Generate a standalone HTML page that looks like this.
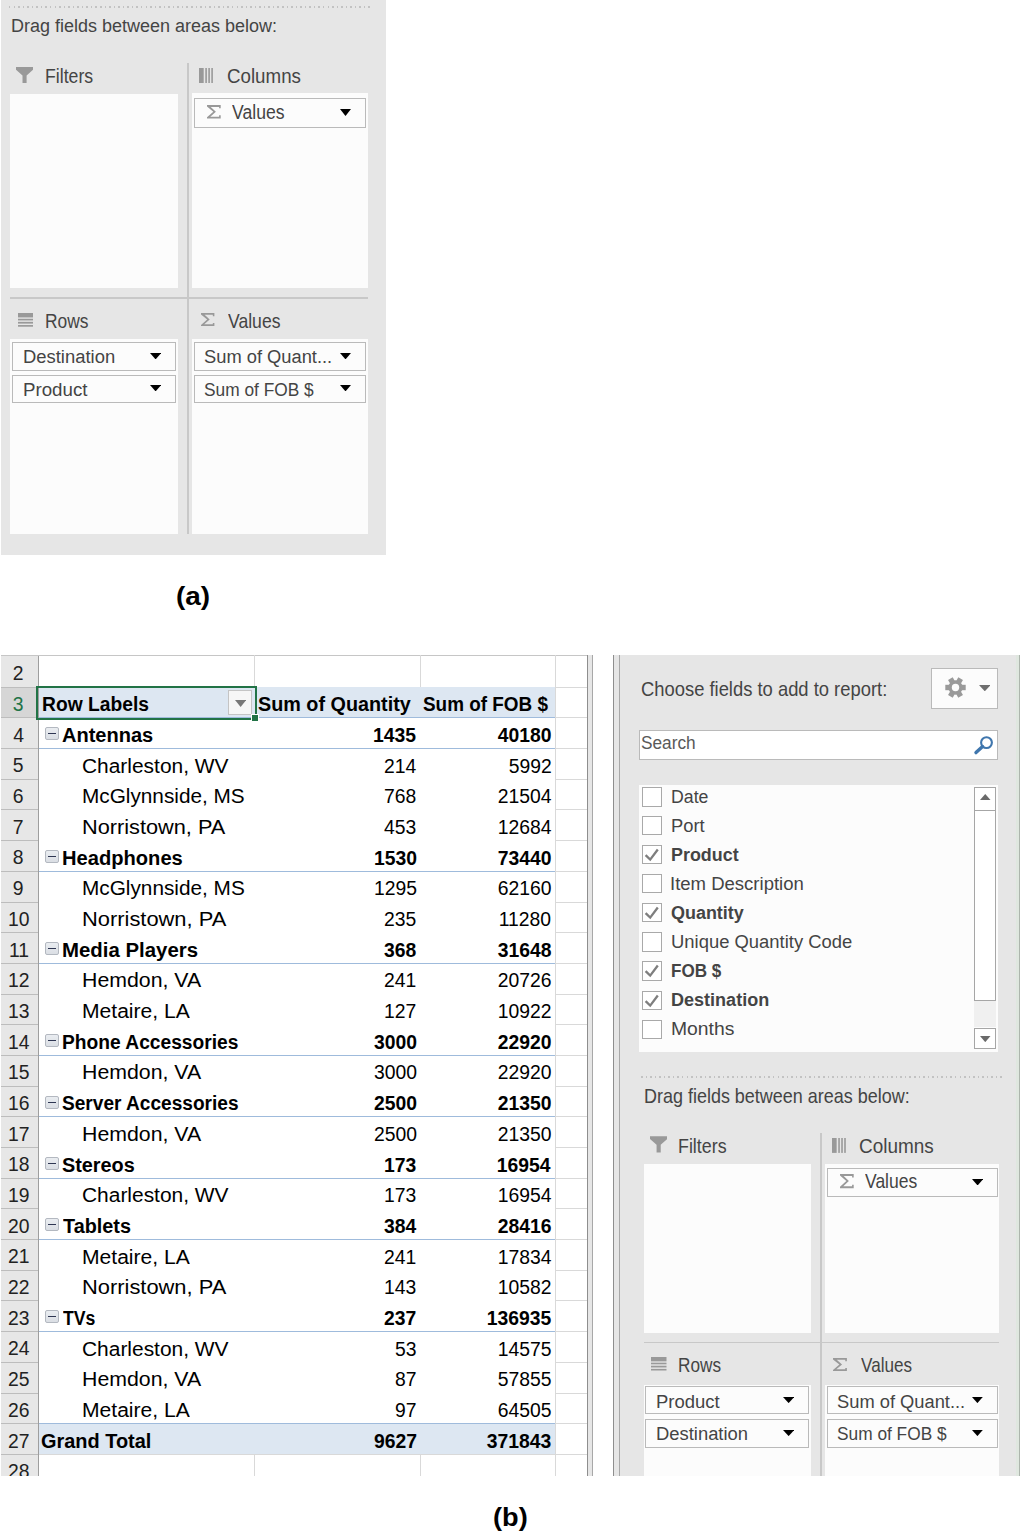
<!DOCTYPE html>
<html><head><meta charset="utf-8"><style>
html,body{margin:0;padding:0;background:#fff;width:1020px;height:1536px;overflow:hidden;position:relative}
div{position:absolute;box-sizing:border-box}
.tx{font-family:'Liberation Sans', sans-serif;white-space:pre;transform-origin:0 0}
</style></head><body>
<div style="left:1px;top:0px;width:385.00px;height:555.00px;background:#e6e6e6"></div>
<div style="left:9px;top:6.25px;width:363.00px;height:1.50px;background:repeating-linear-gradient(90deg,#c2c2c2 0 1.5px,transparent 1.5px 4.55px)"></div>
<svg style="position:absolute;left:16px;top:67px" width="17.00" height="16.00" viewBox="0 0 17 16"><path d="M0 0H17V2.8L10.6 8.4V16H6.5V8.4L0 2.8Z" fill="#999999"/></svg>
<svg style="position:absolute;left:199px;top:68px" width="14.00" height="15.00" viewBox="0 0 14 15" preserveAspectRatio="none"><rect x="0" y="0" width="4.7" height="15" fill="#999999"/><rect x="6.3" y="0" width="1.6" height="15" fill="#999999"/><rect x="9.3" y="0" width="1.6" height="15" fill="#999999"/><rect x="12.3" y="0" width="1.6" height="15" fill="#999999"/></svg>
<div style="left:10px;top:94px;width:168.00px;height:194.00px;background:#fcfcfc"></div>
<div style="left:192px;top:93px;width:176.00px;height:195.00px;background:#fcfcfc"></div>
<div style="left:187.3px;top:63px;width:1.50px;height:471.00px;background:#c8c8c8"></div>
<div style="left:10px;top:297.3px;width:358.00px;height:1.50px;background:#c8c8c8"></div>
<div style="left:194px;top:97.5px;width:172.00px;height:30.30px;background:#fcfcfc;border:1.5px solid #bababa"></div>
<svg style="position:absolute;left:207px;top:105px" width="14.00" height="13.60" viewBox="0 0 14 13.6" preserveAspectRatio="none"><path d="M0 0H13.7V3.3H12.1V1.9H3.7L8.9 6.8L3.3 11.7H12.1V10.2H13.7V13.6H0V12.3L6.3 6.8L0 1.5Z" fill="#999999"/></svg>
<svg style="position:absolute;left:340px;top:109px" width="11.00" height="7.00" viewBox="0 0 11.00 7.00"><path d="M0 0H11.00L5.50 7.00Z" fill="#000"/></svg>
<svg style="position:absolute;left:18px;top:313px" width="15.00" height="13.80" viewBox="0 0 15 13.4" preserveAspectRatio="none"><rect x="0" y="0" width="15" height="4.3" fill="#999999"/><rect x="0" y="5.6" width="15" height="1.6" fill="#999999"/><rect x="0" y="8.6" width="15" height="1.7" fill="#999999"/><rect x="0" y="11.7" width="15" height="1.6" fill="#999999"/></svg>
<svg style="position:absolute;left:201.4px;top:313.3px" width="13.70" height="13.20" viewBox="0 0 14 13.6" preserveAspectRatio="none"><path d="M0 0H13.7V3.3H12.1V1.9H3.7L8.9 6.8L3.3 11.7H12.1V10.2H13.7V13.6H0V12.3L6.3 6.8L0 1.5Z" fill="#999999"/></svg>
<div style="left:10px;top:338.6px;width:168.00px;height:195.70px;background:#fcfcfc"></div>
<div style="left:192px;top:338.6px;width:176.00px;height:195.70px;background:#fcfcfc"></div>
<div style="left:12.2px;top:342.3px;width:163.80px;height:28.30px;background:#fcfcfc;border:1.5px solid #bababa"></div>
<div style="left:12.2px;top:375.1px;width:163.80px;height:27.90px;background:#fcfcfc;border:1.5px solid #bababa"></div>
<div style="left:194px;top:342.3px;width:171.80px;height:28.30px;background:#fcfcfc;border:1.5px solid #bababa"></div>
<div style="left:194px;top:375.1px;width:171.80px;height:27.90px;background:#fcfcfc;border:1.5px solid #bababa"></div>
<svg style="position:absolute;left:150px;top:352.5px" width="11.20" height="6.40" viewBox="0 0 11.20 6.40"><path d="M0 0H11.20L5.60 6.40Z" fill="#000"/></svg>
<svg style="position:absolute;left:150px;top:384.8px" width="11.20" height="6.40" viewBox="0 0 11.20 6.40"><path d="M0 0H11.20L5.60 6.40Z" fill="#000"/></svg>
<svg style="position:absolute;left:340px;top:352.5px" width="11.00" height="6.40" viewBox="0 0 11.00 6.40"><path d="M0 0H11.00L5.50 6.40Z" fill="#000"/></svg>
<svg style="position:absolute;left:340px;top:384.8px" width="11.00" height="6.40" viewBox="0 0 11.00 6.40"><path d="M0 0H11.00L5.50 6.40Z" fill="#000"/></svg>
<div style="left:1px;top:655.0px;width:587.00px;height:820.60px;background:#fff"></div>
<div style="left:1px;top:655.0px;width:37.50px;height:820.60px;background:#e7e7e7"></div>
<div style="left:1px;top:687.0px;width:37.50px;height:30.00px;background:#d6d6d6"></div>
<div style="left:37.6px;top:655.0px;width:1.20px;height:820.60px;background:#9e9e9e"></div>
<div style="left:1px;top:655.0px;width:587.00px;height:1.20px;background:#c6c6c6"></div>
<div style="left:1px;top:687.0px;width:36.60px;height:1.00px;background:#bdbdbd"></div>
<div style="left:555.5px;top:687.0px;width:32.00px;height:1.00px;background:#d9d9d9"></div>
<div style="left:1px;top:717.0px;width:36.60px;height:1.00px;background:#bdbdbd"></div>
<div style="left:555.5px;top:717.0px;width:32.00px;height:1.00px;background:#d9d9d9"></div>
<div style="left:1px;top:748.0px;width:36.60px;height:1.00px;background:#bdbdbd"></div>
<div style="left:555.5px;top:748.0px;width:32.00px;height:1.00px;background:#d9d9d9"></div>
<div style="left:1px;top:779.0px;width:36.60px;height:1.00px;background:#bdbdbd"></div>
<div style="left:555.5px;top:779.0px;width:32.00px;height:1.00px;background:#d9d9d9"></div>
<div style="left:1px;top:809.0px;width:36.60px;height:1.00px;background:#bdbdbd"></div>
<div style="left:555.5px;top:809.0px;width:32.00px;height:1.00px;background:#d9d9d9"></div>
<div style="left:1px;top:840.0px;width:36.60px;height:1.00px;background:#bdbdbd"></div>
<div style="left:555.5px;top:840.0px;width:32.00px;height:1.00px;background:#d9d9d9"></div>
<div style="left:1px;top:871.0px;width:36.60px;height:1.00px;background:#bdbdbd"></div>
<div style="left:555.5px;top:871.0px;width:32.00px;height:1.00px;background:#d9d9d9"></div>
<div style="left:1px;top:902.0px;width:36.60px;height:1.00px;background:#bdbdbd"></div>
<div style="left:555.5px;top:902.0px;width:32.00px;height:1.00px;background:#d9d9d9"></div>
<div style="left:1px;top:932.0px;width:36.60px;height:1.00px;background:#bdbdbd"></div>
<div style="left:555.5px;top:932.0px;width:32.00px;height:1.00px;background:#d9d9d9"></div>
<div style="left:1px;top:963.0px;width:36.60px;height:1.00px;background:#bdbdbd"></div>
<div style="left:555.5px;top:963.0px;width:32.00px;height:1.00px;background:#d9d9d9"></div>
<div style="left:1px;top:994.0px;width:36.60px;height:1.00px;background:#bdbdbd"></div>
<div style="left:555.5px;top:994.0px;width:32.00px;height:1.00px;background:#d9d9d9"></div>
<div style="left:1px;top:1024.0px;width:36.60px;height:1.00px;background:#bdbdbd"></div>
<div style="left:555.5px;top:1024.0px;width:32.00px;height:1.00px;background:#d9d9d9"></div>
<div style="left:1px;top:1055.0px;width:36.60px;height:1.00px;background:#bdbdbd"></div>
<div style="left:555.5px;top:1055.0px;width:32.00px;height:1.00px;background:#d9d9d9"></div>
<div style="left:1px;top:1086.0px;width:36.60px;height:1.00px;background:#bdbdbd"></div>
<div style="left:555.5px;top:1086.0px;width:32.00px;height:1.00px;background:#d9d9d9"></div>
<div style="left:1px;top:1116.0px;width:36.60px;height:1.00px;background:#bdbdbd"></div>
<div style="left:555.5px;top:1116.0px;width:32.00px;height:1.00px;background:#d9d9d9"></div>
<div style="left:1px;top:1147.0px;width:36.60px;height:1.00px;background:#bdbdbd"></div>
<div style="left:555.5px;top:1147.0px;width:32.00px;height:1.00px;background:#d9d9d9"></div>
<div style="left:1px;top:1178.0px;width:36.60px;height:1.00px;background:#bdbdbd"></div>
<div style="left:555.5px;top:1178.0px;width:32.00px;height:1.00px;background:#d9d9d9"></div>
<div style="left:1px;top:1208.0px;width:36.60px;height:1.00px;background:#bdbdbd"></div>
<div style="left:555.5px;top:1208.0px;width:32.00px;height:1.00px;background:#d9d9d9"></div>
<div style="left:1px;top:1239.0px;width:36.60px;height:1.00px;background:#bdbdbd"></div>
<div style="left:555.5px;top:1239.0px;width:32.00px;height:1.00px;background:#d9d9d9"></div>
<div style="left:1px;top:1270.0px;width:36.60px;height:1.00px;background:#bdbdbd"></div>
<div style="left:555.5px;top:1270.0px;width:32.00px;height:1.00px;background:#d9d9d9"></div>
<div style="left:1px;top:1300.0px;width:36.60px;height:1.00px;background:#bdbdbd"></div>
<div style="left:555.5px;top:1300.0px;width:32.00px;height:1.00px;background:#d9d9d9"></div>
<div style="left:1px;top:1331.0px;width:36.60px;height:1.00px;background:#bdbdbd"></div>
<div style="left:555.5px;top:1331.0px;width:32.00px;height:1.00px;background:#d9d9d9"></div>
<div style="left:1px;top:1362.0px;width:36.60px;height:1.00px;background:#bdbdbd"></div>
<div style="left:555.5px;top:1362.0px;width:32.00px;height:1.00px;background:#d9d9d9"></div>
<div style="left:1px;top:1393.0px;width:36.60px;height:1.00px;background:#bdbdbd"></div>
<div style="left:555.5px;top:1393.0px;width:32.00px;height:1.00px;background:#d9d9d9"></div>
<div style="left:1px;top:1423.0px;width:36.60px;height:1.00px;background:#bdbdbd"></div>
<div style="left:555.5px;top:1423.0px;width:32.00px;height:1.00px;background:#d9d9d9"></div>
<div style="left:1px;top:1454.0px;width:36.60px;height:1.00px;background:#bdbdbd"></div>
<div style="left:555.5px;top:1454.0px;width:32.00px;height:1.00px;background:#d9d9d9"></div>
<div style="left:38.8px;top:687.0px;width:516.70px;height:1.00px;background:#d9d9d9"></div>
<div style="left:253.9px;top:655.0px;width:1.20px;height:32.00px;background:#d9d9d9"></div>
<div style="left:253.9px;top:1454.0px;width:1.20px;height:21.60px;background:#d9d9d9"></div>
<div style="left:419.59999999999997px;top:655.0px;width:1.20px;height:32.00px;background:#d9d9d9"></div>
<div style="left:419.59999999999997px;top:1454.0px;width:1.20px;height:21.60px;background:#d9d9d9"></div>
<div style="left:554.9px;top:655.0px;width:1.20px;height:32.00px;background:#d9d9d9"></div>
<div style="left:554.9px;top:1454.0px;width:1.20px;height:21.60px;background:#d9d9d9"></div>
<div style="left:554.9px;top:655.0px;width:1.20px;height:820.60px;background:#d9d9d9"></div>
<div style="left:38.8px;top:687.0px;width:516.70px;height:30.00px;background:#dde7f2"></div>
<div style="left:38.8px;top:1423.0px;width:516.70px;height:31.00px;background:#dde7f2"></div>
<div style="left:38.8px;top:717.0px;width:516.70px;height:1.30px;background:#9fbbdc"></div>
<div style="left:38.8px;top:748.0px;width:516.70px;height:1.30px;background:#9fbbdc"></div>
<div style="left:38.8px;top:871.0px;width:516.70px;height:1.30px;background:#9fbbdc"></div>
<div style="left:38.8px;top:963.0px;width:516.70px;height:1.30px;background:#9fbbdc"></div>
<div style="left:38.8px;top:1055.0px;width:516.70px;height:1.30px;background:#9fbbdc"></div>
<div style="left:38.8px;top:1116.0px;width:516.70px;height:1.30px;background:#9fbbdc"></div>
<div style="left:38.8px;top:1178.0px;width:516.70px;height:1.30px;background:#9fbbdc"></div>
<div style="left:38.8px;top:1239.0px;width:516.70px;height:1.30px;background:#9fbbdc"></div>
<div style="left:38.8px;top:1331.0px;width:516.70px;height:1.30px;background:#9fbbdc"></div>
<div style="left:38.8px;top:1423.0px;width:516.70px;height:1.30px;background:#9fbbdc"></div>
<div style="left:38.8px;top:1454.0px;width:516.70px;height:1.00px;background:#d9d9d9"></div>
<div style="left:45.2px;top:726.6px;width:13.80px;height:13.00px;background:linear-gradient(#eaedf1,#dadee4);border:1.4px solid #b3b8c0;border-radius:2px"></div>
<div style="left:48.1px;top:732.6px;width:7.80px;height:1.40px;background:#2e3652"></div>
<div style="left:45.2px;top:849.6px;width:13.80px;height:13.00px;background:linear-gradient(#eaedf1,#dadee4);border:1.4px solid #b3b8c0;border-radius:2px"></div>
<div style="left:48.1px;top:855.6px;width:7.80px;height:1.40px;background:#2e3652"></div>
<div style="left:45.2px;top:941.6px;width:13.80px;height:13.00px;background:linear-gradient(#eaedf1,#dadee4);border:1.4px solid #b3b8c0;border-radius:2px"></div>
<div style="left:48.1px;top:947.6px;width:7.80px;height:1.40px;background:#2e3652"></div>
<div style="left:45.2px;top:1033.6px;width:13.80px;height:13.00px;background:linear-gradient(#eaedf1,#dadee4);border:1.4px solid #b3b8c0;border-radius:2px"></div>
<div style="left:48.1px;top:1039.6px;width:7.80px;height:1.40px;background:#2e3652"></div>
<div style="left:45.2px;top:1095.6px;width:13.80px;height:13.00px;background:linear-gradient(#eaedf1,#dadee4);border:1.4px solid #b3b8c0;border-radius:2px"></div>
<div style="left:48.1px;top:1101.6px;width:7.80px;height:1.40px;background:#2e3652"></div>
<div style="left:45.2px;top:1156.6px;width:13.80px;height:13.00px;background:linear-gradient(#eaedf1,#dadee4);border:1.4px solid #b3b8c0;border-radius:2px"></div>
<div style="left:48.1px;top:1162.6px;width:7.80px;height:1.40px;background:#2e3652"></div>
<div style="left:45.2px;top:1217.6px;width:13.80px;height:13.00px;background:linear-gradient(#eaedf1,#dadee4);border:1.4px solid #b3b8c0;border-radius:2px"></div>
<div style="left:48.1px;top:1223.6px;width:7.80px;height:1.40px;background:#2e3652"></div>
<div style="left:45.2px;top:1309.6px;width:13.80px;height:13.00px;background:linear-gradient(#eaedf1,#dadee4);border:1.4px solid #b3b8c0;border-radius:2px"></div>
<div style="left:48.1px;top:1315.6px;width:7.80px;height:1.40px;background:#2e3652"></div>
<div style="left:587px;top:655.0px;width:1.20px;height:820.60px;background:#8e8e8e"></div>
<div style="left:588.2px;top:655.0px;width:3.80px;height:820.60px;background:#e6e6e6"></div>
<div style="left:592px;top:655.0px;width:1.20px;height:820.60px;background:#a8a8a8"></div>
<div style="left:613px;top:655.0px;width:1.20px;height:820.60px;background:#8e8e8e"></div>
<div style="left:614.2px;top:655.0px;width:5.00px;height:820.60px;background:#e6e6e6"></div>
<div style="left:619.2px;top:655.0px;width:1.20px;height:820.60px;background:#a8a8a8"></div>
<div style="left:36.3px;top:685.5px;width:220.70px;height:34.30px;border:2.4px solid #217346"></div>
<div style="left:228.2px;top:690.4px;width:24.00px;height:24.60px;background:#f6f6f6;border:1.2px solid #c4c4c4"></div>
<svg style="position:absolute;left:235px;top:700px" width="11.30" height="7.00" viewBox="0 0 11.30 7.00"><path d="M0 0H11.30L5.65 7.00Z" fill="#777"/></svg>
<div style="left:250.6px;top:714.3px;width:8.20px;height:7.50px;background:#217346;border:1px solid #fff"></div>
<div style="left:620.4px;top:655.0px;width:395.60px;height:820.60px;background:#e6e6e6"></div>
<div style="left:1016px;top:655.0px;width:3.00px;height:820.60px;background:#dfe7df"></div>
<div style="left:1019px;top:655.0px;width:1.00px;height:820.60px;background:#adb5ad"></div>
<div style="left:931px;top:668.2px;width:67.00px;height:41.20px;background:#fcfcfc;border:1.5px solid #bababa"></div>
<svg style="position:absolute;left:945.3px;top:676.9px" width="21" height="21" viewBox="-10.5 -10.5 21 21"><g fill="#9a9a9a"><circle r="7.2"/><rect x="-2.7" y="-10.2" width="5.4" height="5" transform="rotate(30)"/><rect x="-2.7" y="-10.2" width="5.4" height="5" transform="rotate(90)"/><rect x="-2.7" y="-10.2" width="5.4" height="5" transform="rotate(150)"/><rect x="-2.7" y="-10.2" width="5.4" height="5" transform="rotate(210)"/><rect x="-2.7" y="-10.2" width="5.4" height="5" transform="rotate(270)"/><rect x="-2.7" y="-10.2" width="5.4" height="5" transform="rotate(330)"/></g><circle r="3.7" fill="#fcfcfc"/></svg>
<svg style="position:absolute;left:978.8px;top:685px" width="11.60" height="6.30" viewBox="0 0 11.60 6.30"><path d="M0 0H11.60L5.80 6.30Z" fill="#6f6f6f"/></svg>
<div style="left:639px;top:730px;width:359.00px;height:29.60px;background:#fff;border:1.5px solid #bababa"></div>
<svg style="position:absolute;left:968px;top:732px" width="28" height="26" viewBox="0 0 28 26"><circle cx="18.5" cy="10.6" r="5.4" fill="none" stroke="#3f76ad" stroke-width="2.1"/><path d="M14.6 14.6L8 20.6" stroke="#3f76ad" stroke-width="3.4" stroke-linecap="round"/></svg>
<div style="left:638.8px;top:784.7px;width:359.20px;height:267.10px;background:#fcfcfc"></div>
<div style="left:642.3px;top:787.2px;width:19.70px;height:19.40px;background:#fff;border:1.6px solid #a9a9a9"></div>
<div style="left:642.3px;top:816.0px;width:19.70px;height:19.40px;background:#fff;border:1.6px solid #a9a9a9"></div>
<div style="left:642.3px;top:844.9000000000001px;width:19.70px;height:19.40px;background:#fff;border:1.6px solid #a9a9a9"></div>
<svg style="position:absolute;left:642.3px;top:844.90px" width="19.7" height="19.4" viewBox="0 0 19.7 19.4"><path d="M3.6 10.1L8.2 14.6L15.8 4.5" fill="none" stroke="#7e7e7e" stroke-width="2.3"/></svg>
<div style="left:642.3px;top:874.1px;width:19.70px;height:19.40px;background:#fff;border:1.6px solid #a9a9a9"></div>
<div style="left:642.3px;top:903.0px;width:19.70px;height:19.40px;background:#fff;border:1.6px solid #a9a9a9"></div>
<svg style="position:absolute;left:642.3px;top:903.00px" width="19.7" height="19.4" viewBox="0 0 19.7 19.4"><path d="M3.6 10.1L8.2 14.6L15.8 4.5" fill="none" stroke="#7e7e7e" stroke-width="2.3"/></svg>
<div style="left:642.3px;top:932.4000000000001px;width:19.70px;height:19.40px;background:#fff;border:1.6px solid #a9a9a9"></div>
<div style="left:642.3px;top:961.4000000000001px;width:19.70px;height:19.40px;background:#fff;border:1.6px solid #a9a9a9"></div>
<svg style="position:absolute;left:642.3px;top:961.40px" width="19.7" height="19.4" viewBox="0 0 19.7 19.4"><path d="M3.6 10.1L8.2 14.6L15.8 4.5" fill="none" stroke="#7e7e7e" stroke-width="2.3"/></svg>
<div style="left:642.3px;top:990.6px;width:19.70px;height:19.40px;background:#fff;border:1.6px solid #a9a9a9"></div>
<svg style="position:absolute;left:642.3px;top:990.60px" width="19.7" height="19.4" viewBox="0 0 19.7 19.4"><path d="M3.6 10.1L8.2 14.6L15.8 4.5" fill="none" stroke="#7e7e7e" stroke-width="2.3"/></svg>
<div style="left:642.3px;top:1019.5px;width:19.70px;height:19.40px;background:#fff;border:1.6px solid #a9a9a9"></div>
<div style="left:973.7px;top:810.4px;width:22.30px;height:217.10px;background:#f0f0f0"></div>
<div style="left:973.7px;top:786.9px;width:22.30px;height:23.70px;background:#fff;border:1.5px solid #a6a6a6"></div>
<div style="left:973.7px;top:810.4px;width:22.30px;height:190.40px;background:#fff;border:1.5px solid #a6a6a6"></div>
<div style="left:973.7px;top:1027.5px;width:22.30px;height:21.90px;background:#fff;border:1.5px solid #a6a6a6"></div>
<svg style="position:absolute;left:980px;top:794px" width="10.5" height="6" viewBox="0 0 10.5 6"><path d="M0 6H10.5L5.25 0Z" fill="#6a6a6a"/></svg>
<svg style="position:absolute;left:980px;top:1036.3px" width="10.50" height="6.20" viewBox="0 0 10.50 6.20"><path d="M0 0H10.50L5.25 6.20Z" fill="#6a6a6a"/></svg>
<div style="left:641px;top:1076.25px;width:363.00px;height:1.50px;background:repeating-linear-gradient(90deg,#c2c2c2 0 1.5px,transparent 1.5px 4.55px)"></div>
<svg style="position:absolute;left:649.6px;top:1136px" width="17.20" height="16.60" viewBox="0 0 17 16"><path d="M0 0H17V2.8L10.6 8.4V16H6.5V8.4L0 2.8Z" fill="#999999"/></svg>
<svg style="position:absolute;left:832.1px;top:1137.9px" width="13.90" height="14.90" viewBox="0 0 14 15" preserveAspectRatio="none"><rect x="0" y="0" width="4.7" height="15" fill="#999999"/><rect x="6.3" y="0" width="1.6" height="15" fill="#999999"/><rect x="9.3" y="0" width="1.6" height="15" fill="#999999"/><rect x="12.3" y="0" width="1.6" height="15" fill="#999999"/></svg>
<div style="left:643.7px;top:1164px;width:166.90px;height:168.50px;background:#fcfcfc"></div>
<div style="left:825.3px;top:1164px;width:174.20px;height:168.50px;background:#fcfcfc"></div>
<div style="left:820.2px;top:1133px;width:1.50px;height:342.60px;background:#c8c8c8"></div>
<div style="left:643.7px;top:1341.5px;width:355.80px;height:1.50px;background:#c8c8c8"></div>
<div style="left:826.5px;top:1167.5px;width:171.20px;height:29.10px;background:#fcfcfc;border:1.5px solid #bababa"></div>
<svg style="position:absolute;left:840px;top:1174.4px" width="14.00" height="14.20" viewBox="0 0 14 13.6" preserveAspectRatio="none"><path d="M0 0H13.7V3.3H12.1V1.9H3.7L8.9 6.8L3.3 11.7H12.1V10.2H13.7V13.6H0V12.3L6.3 6.8L0 1.5Z" fill="#999999"/></svg>
<svg style="position:absolute;left:971.6px;top:1178.5px" width="11.20" height="6.50" viewBox="0 0 11.20 6.50"><path d="M0 0H11.20L5.60 6.50Z" fill="#000"/></svg>
<svg style="position:absolute;left:651px;top:1357.3px" width="15.50" height="13.60" viewBox="0 0 15 13.4" preserveAspectRatio="none"><rect x="0" y="0" width="15" height="4.3" fill="#999999"/><rect x="0" y="5.6" width="15" height="1.6" fill="#999999"/><rect x="0" y="8.6" width="15" height="1.7" fill="#999999"/><rect x="0" y="11.7" width="15" height="1.6" fill="#999999"/></svg>
<svg style="position:absolute;left:833px;top:1357.8px" width="14.20" height="13.20" viewBox="0 0 14 13.6" preserveAspectRatio="none"><path d="M0 0H13.7V3.3H12.1V1.9H3.7L8.9 6.8L3.3 11.7H12.1V10.2H13.7V13.6H0V12.3L6.3 6.8L0 1.5Z" fill="#999999"/></svg>
<div style="left:643.7px;top:1384.5px;width:166.90px;height:91.10px;background:#fcfcfc"></div>
<div style="left:825.3px;top:1384.5px;width:174.20px;height:91.10px;background:#fcfcfc"></div>
<div style="left:645.2px;top:1386.4px;width:163.60px;height:27.90px;background:#fcfcfc;border:1.5px solid #bababa"></div>
<div style="left:645.2px;top:1419.2px;width:163.60px;height:28.40px;background:#fcfcfc;border:1.5px solid #bababa"></div>
<div style="left:826.7px;top:1386.4px;width:171.00px;height:27.90px;background:#fcfcfc;border:1.5px solid #bababa"></div>
<div style="left:826.7px;top:1419.2px;width:171.00px;height:28.40px;background:#fcfcfc;border:1.5px solid #bababa"></div>
<svg style="position:absolute;left:783px;top:1396.9px" width="11.30" height="6.10" viewBox="0 0 11.30 6.10"><path d="M0 0H11.30L5.65 6.10Z" fill="#000"/></svg>
<svg style="position:absolute;left:783px;top:1429.7px" width="11.30" height="6.10" viewBox="0 0 11.30 6.10"><path d="M0 0H11.30L5.65 6.10Z" fill="#000"/></svg>
<svg style="position:absolute;left:972px;top:1396.9px" width="10.80" height="6.10" viewBox="0 0 10.80 6.10"><path d="M0 0H10.80L5.40 6.10Z" fill="#000"/></svg>
<svg style="position:absolute;left:972px;top:1429.7px" width="10.80" height="6.10" viewBox="0 0 10.80 6.10"><path d="M0 0H10.80L5.40 6.10Z" fill="#000"/></svg>
<div class="tx" style="left:11.06px;top:16.00px;font-size:19.19px;line-height:19.19px;color:#444444;transform:scaleX(0.9377)">Drag fields between areas below:</div>
<div class="tx" style="left:44.90px;top:67.30px;font-size:19.62px;line-height:19.62px;color:#444444;transform:scaleX(0.9020)">Filters</div>
<div class="tx" style="left:227.44px;top:67.30px;font-size:19.62px;line-height:19.62px;color:#444444;transform:scaleX(0.9553)">Columns</div>
<div class="tx" style="left:232.20px;top:102.50px;font-size:19.33px;line-height:19.33px;color:#444444;transform:scaleX(0.9105)">Values</div>
<div class="tx" style="left:44.73px;top:311.80px;font-size:19.62px;line-height:19.62px;color:#444444;transform:scaleX(0.8872)">Rows</div>
<div class="tx" style="left:227.80px;top:311.60px;font-size:19.62px;line-height:19.62px;color:#444444;transform:scaleX(0.8966)">Values</div>
<div class="tx" style="left:22.54px;top:347.10px;font-size:19.19px;line-height:19.19px;color:#444444;transform:scaleX(0.9596)">Destination</div>
<div class="tx" style="left:22.52px;top:379.70px;font-size:19.19px;line-height:19.19px;color:#444444;transform:scaleX(0.9754)">Product</div>
<div class="tx" style="left:204.35px;top:347.00px;font-size:19.19px;line-height:19.19px;color:#444444;transform:scaleX(0.9538)">Sum of Quant...</div>
<div class="tx" style="left:204.40px;top:379.70px;font-size:19.19px;line-height:19.19px;color:#444444;transform:scaleX(0.9025)">Sum of FOB $</div>
<div class="tx" style="left:175.93px;top:583.30px;font-size:26.16px;line-height:26.16px;font-weight:bold;color:#000;transform:scaleX(1.0667)">(a)</div>
<div class="tx" style="left:640.66px;top:679.60px;font-size:19.62px;line-height:19.62px;color:#444444;transform:scaleX(0.9373)">Choose fields to add to report:</div>
<div class="tx" style="left:641.09px;top:734.00px;font-size:18.9px;line-height:18.9px;color:#595959;transform:scaleX(0.9138)">Search</div>
<div class="tx" style="left:671.28px;top:787.00px;font-size:19.19px;line-height:19.19px;color:#444444;transform:scaleX(0.9231)">Date</div>
<div class="tx" style="left:671.24px;top:815.80px;font-size:19.19px;line-height:19.19px;color:#444444;transform:scaleX(0.9559)">Port</div>
<div class="tx" style="left:671.27px;top:844.70px;font-size:19.19px;line-height:19.19px;font-weight:bold;color:#444444;transform:scaleX(0.9324)">Product</div>
<div class="tx" style="left:670.27px;top:873.90px;font-size:19.19px;line-height:19.19px;color:#444444;transform:scaleX(0.9654)">Item Description</div>
<div class="tx" style="left:671.26px;top:902.80px;font-size:19.19px;line-height:19.19px;font-weight:bold;color:#444444;transform:scaleX(0.9351)">Quantity</div>
<div class="tx" style="left:671.24px;top:932.20px;font-size:19.19px;line-height:19.19px;color:#444444;transform:scaleX(0.9604)">Unique Quantity Code</div>
<div class="tx" style="left:671.31px;top:961.20px;font-size:19.19px;line-height:19.19px;font-weight:bold;color:#444444;transform:scaleX(0.8909)">FOB $</div>
<div class="tx" style="left:671.26px;top:990.40px;font-size:19.19px;line-height:19.19px;font-weight:bold;color:#444444;transform:scaleX(0.9398)">Destination</div>
<div class="tx" style="left:671.19px;top:1019.30px;font-size:19.19px;line-height:19.19px;color:#444444;transform:scaleX(1.0066)">Months</div>
<div class="tx" style="left:644.35px;top:1086.60px;font-size:19.48px;line-height:19.48px;color:#444444;transform:scaleX(0.9229)">Drag fields between areas below:</div>
<div class="tx" style="left:678.18px;top:1136.60px;font-size:19.62px;line-height:19.62px;color:#444444;transform:scaleX(0.9098)">Filters</div>
<div class="tx" style="left:858.83px;top:1136.60px;font-size:19.62px;line-height:19.62px;color:#444444;transform:scaleX(0.9658)">Columns</div>
<div class="tx" style="left:864.70px;top:1172.10px;font-size:19.62px;line-height:19.62px;color:#444444;transform:scaleX(0.8931)">Values</div>
<div class="tx" style="left:678.25px;top:1356.30px;font-size:19.62px;line-height:19.62px;color:#444444;transform:scaleX(0.8766)">Rows</div>
<div class="tx" style="left:860.60px;top:1356.30px;font-size:19.62px;line-height:19.62px;color:#444444;transform:scaleX(0.8724)">Values</div>
<div class="tx" style="left:655.84px;top:1391.50px;font-size:19.19px;line-height:19.19px;color:#444444;transform:scaleX(0.9631)">Product</div>
<div class="tx" style="left:655.84px;top:1423.80px;font-size:19.19px;line-height:19.19px;color:#444444;transform:scaleX(0.9585)">Destination</div>
<div class="tx" style="left:836.55px;top:1391.50px;font-size:19.19px;line-height:19.19px;color:#444444;transform:scaleX(0.9538)">Sum of Quant...</div>
<div class="tx" style="left:836.60px;top:1423.80px;font-size:19.19px;line-height:19.19px;color:#444444;transform:scaleX(0.9017)">Sum of FOB $</div>
<div class="tx" style="left:493.26px;top:1503.50px;font-size:26.16px;line-height:26.16px;font-weight:bold;color:#000;transform:scaleX(1.0387)">(b)</div>
<div class="tx" style="left:41.81px;top:695.20px;font-size:19.48px;line-height:19.48px;font-weight:bold;color:#000;transform:scaleX(0.9887)">Row Labels</div>
<div class="tx" style="left:258.18px;top:695.20px;font-size:19.48px;line-height:19.48px;font-weight:bold;color:#000;transform:scaleX(1.0161)">Sum of Quantity</div>
<div class="tx" style="left:423.33px;top:695.20px;font-size:19.48px;line-height:19.48px;font-weight:bold;color:#000;transform:scaleX(0.9703)">Sum of FOB $</div>
<div class="tx" style="left:61.77px;top:725.89px;font-size:19.33px;line-height:19.33px;font-weight:bold;color:#000;transform:scaleX(1.0349)">Antennas</div>
<div class="tx" style="left:81.92px;top:756.58px;font-size:19.33px;line-height:19.33px;color:#000;transform:scaleX(1.0821)">Charleston, WV</div>
<div class="tx" style="left:81.93px;top:787.27px;font-size:19.33px;line-height:19.33px;color:#000;transform:scaleX(1.0740)">McGlynnside, MS</div>
<div class="tx" style="left:81.88px;top:817.96px;font-size:19.33px;line-height:19.33px;color:#000;transform:scaleX(1.1246)">Norristown, PA</div>
<div class="tx" style="left:61.76px;top:848.65px;font-size:19.33px;line-height:19.33px;font-weight:bold;color:#000;transform:scaleX(1.0412)">Headphones</div>
<div class="tx" style="left:81.93px;top:879.34px;font-size:19.33px;line-height:19.33px;color:#000;transform:scaleX(1.0747)">McGlynnside, MS</div>
<div class="tx" style="left:81.87px;top:910.03px;font-size:19.33px;line-height:19.33px;color:#000;transform:scaleX(1.1317)">Norristown, PA</div>
<div class="tx" style="left:61.74px;top:940.72px;font-size:19.33px;line-height:19.33px;font-weight:bold;color:#000;transform:scaleX(1.0551)">Media Players</div>
<div class="tx" style="left:81.90px;top:971.41px;font-size:19.33px;line-height:19.33px;color:#000;transform:scaleX(1.1019)">Hemdon, VA</div>
<div class="tx" style="left:81.91px;top:1002.10px;font-size:19.33px;line-height:19.33px;color:#000;transform:scaleX(1.0908)">Metaire, LA</div>
<div class="tx" style="left:61.81px;top:1032.79px;font-size:19.33px;line-height:19.33px;font-weight:bold;color:#000;transform:scaleX(0.9932)">Phone Accessories</div>
<div class="tx" style="left:81.90px;top:1063.48px;font-size:19.33px;line-height:19.33px;color:#000;transform:scaleX(1.1019)">Hemdon, VA</div>
<div class="tx" style="left:61.81px;top:1094.17px;font-size:19.33px;line-height:19.33px;font-weight:bold;color:#000;transform:scaleX(0.9876)">Server Accessories</div>
<div class="tx" style="left:81.90px;top:1124.86px;font-size:19.33px;line-height:19.33px;color:#000;transform:scaleX(1.1019)">Hemdon, VA</div>
<div class="tx" style="left:61.77px;top:1155.55px;font-size:19.33px;line-height:19.33px;font-weight:bold;color:#000;transform:scaleX(1.0261)">Stereos</div>
<div class="tx" style="left:81.92px;top:1186.24px;font-size:19.33px;line-height:19.33px;color:#000;transform:scaleX(1.0828)">Charleston, WV</div>
<div class="tx" style="left:62.80px;top:1216.93px;font-size:19.33px;line-height:19.33px;font-weight:bold;color:#000;transform:scaleX(1.0258)">Tablets</div>
<div class="tx" style="left:81.91px;top:1247.62px;font-size:19.33px;line-height:19.33px;color:#000;transform:scaleX(1.0908)">Metaire, LA</div>
<div class="tx" style="left:81.87px;top:1278.31px;font-size:19.33px;line-height:19.33px;color:#000;transform:scaleX(1.1317)">Norristown, PA</div>
<div class="tx" style="left:62.80px;top:1309.00px;font-size:19.33px;line-height:19.33px;font-weight:bold;color:#000;transform:scaleX(0.9143)">TVs</div>
<div class="tx" style="left:81.92px;top:1339.69px;font-size:19.33px;line-height:19.33px;color:#000;transform:scaleX(1.0828)">Charleston, WV</div>
<div class="tx" style="left:81.90px;top:1370.38px;font-size:19.33px;line-height:19.33px;color:#000;transform:scaleX(1.1019)">Hemdon, VA</div>
<div class="tx" style="left:81.91px;top:1401.07px;font-size:19.33px;line-height:19.33px;color:#000;transform:scaleX(1.0908)">Metaire, LA</div>
<div class="tx" style="left:41.47px;top:1431.76px;font-size:19.33px;line-height:19.33px;font-weight:bold;color:#000;transform:scaleX(1.0314)">Grand Total</div>
<div class="tx" style="left:373.00px;top:725.89px;font-size:19.33px;line-height:19.33px;font-weight:bold;color:#000">1435</div>
<div class="tx" style="left:497.80px;top:725.89px;font-size:19.33px;line-height:19.33px;font-weight:bold;color:#000">40180</div>
<div class="tx" style="left:384.00px;top:756.58px;font-size:19.33px;line-height:19.33px;color:#000">214</div>
<div class="tx" style="left:508.80px;top:756.58px;font-size:19.33px;line-height:19.33px;color:#000">5992</div>
<div class="tx" style="left:384.00px;top:787.27px;font-size:19.33px;line-height:19.33px;color:#000">768</div>
<div class="tx" style="left:497.80px;top:787.27px;font-size:19.33px;line-height:19.33px;color:#000">21504</div>
<div class="tx" style="left:384.00px;top:817.96px;font-size:19.33px;line-height:19.33px;color:#000">453</div>
<div class="tx" style="left:497.80px;top:817.96px;font-size:19.33px;line-height:19.33px;color:#000">12684</div>
<div class="tx" style="left:374.00px;top:848.65px;font-size:19.33px;line-height:19.33px;font-weight:bold;color:#000">1530</div>
<div class="tx" style="left:497.80px;top:848.65px;font-size:19.33px;line-height:19.33px;font-weight:bold;color:#000">73440</div>
<div class="tx" style="left:374.00px;top:879.34px;font-size:19.33px;line-height:19.33px;color:#000">1295</div>
<div class="tx" style="left:497.80px;top:879.34px;font-size:19.33px;line-height:19.33px;color:#000">62160</div>
<div class="tx" style="left:384.00px;top:910.03px;font-size:19.33px;line-height:19.33px;color:#000">235</div>
<div class="tx" style="left:498.80px;top:910.03px;font-size:19.33px;line-height:19.33px;color:#000">11280</div>
<div class="tx" style="left:384.00px;top:940.72px;font-size:19.33px;line-height:19.33px;font-weight:bold;color:#000">368</div>
<div class="tx" style="left:497.80px;top:940.72px;font-size:19.33px;line-height:19.33px;font-weight:bold;color:#000">31648</div>
<div class="tx" style="left:384.00px;top:971.41px;font-size:19.33px;line-height:19.33px;color:#000">241</div>
<div class="tx" style="left:497.80px;top:971.41px;font-size:19.33px;line-height:19.33px;color:#000">20726</div>
<div class="tx" style="left:384.00px;top:1002.10px;font-size:19.33px;line-height:19.33px;color:#000">127</div>
<div class="tx" style="left:497.80px;top:1002.10px;font-size:19.33px;line-height:19.33px;color:#000">10922</div>
<div class="tx" style="left:374.00px;top:1032.79px;font-size:19.33px;line-height:19.33px;font-weight:bold;color:#000">3000</div>
<div class="tx" style="left:497.80px;top:1032.79px;font-size:19.33px;line-height:19.33px;font-weight:bold;color:#000">22920</div>
<div class="tx" style="left:374.00px;top:1063.48px;font-size:19.33px;line-height:19.33px;color:#000">3000</div>
<div class="tx" style="left:497.80px;top:1063.48px;font-size:19.33px;line-height:19.33px;color:#000">22920</div>
<div class="tx" style="left:374.00px;top:1094.17px;font-size:19.33px;line-height:19.33px;font-weight:bold;color:#000">2500</div>
<div class="tx" style="left:497.80px;top:1094.17px;font-size:19.33px;line-height:19.33px;font-weight:bold;color:#000">21350</div>
<div class="tx" style="left:374.00px;top:1124.86px;font-size:19.33px;line-height:19.33px;color:#000">2500</div>
<div class="tx" style="left:497.80px;top:1124.86px;font-size:19.33px;line-height:19.33px;color:#000">21350</div>
<div class="tx" style="left:384.00px;top:1155.55px;font-size:19.33px;line-height:19.33px;font-weight:bold;color:#000">173</div>
<div class="tx" style="left:496.80px;top:1155.55px;font-size:19.33px;line-height:19.33px;font-weight:bold;color:#000">16954</div>
<div class="tx" style="left:384.00px;top:1186.24px;font-size:19.33px;line-height:19.33px;color:#000">173</div>
<div class="tx" style="left:497.80px;top:1186.24px;font-size:19.33px;line-height:19.33px;color:#000">16954</div>
<div class="tx" style="left:384.00px;top:1216.93px;font-size:19.33px;line-height:19.33px;font-weight:bold;color:#000">384</div>
<div class="tx" style="left:497.80px;top:1216.93px;font-size:19.33px;line-height:19.33px;font-weight:bold;color:#000">28416</div>
<div class="tx" style="left:384.00px;top:1247.62px;font-size:19.33px;line-height:19.33px;color:#000">241</div>
<div class="tx" style="left:497.80px;top:1247.62px;font-size:19.33px;line-height:19.33px;color:#000">17834</div>
<div class="tx" style="left:384.00px;top:1278.31px;font-size:19.33px;line-height:19.33px;color:#000">143</div>
<div class="tx" style="left:497.80px;top:1278.31px;font-size:19.33px;line-height:19.33px;color:#000">10582</div>
<div class="tx" style="left:384.00px;top:1309.00px;font-size:19.33px;line-height:19.33px;font-weight:bold;color:#000">237</div>
<div class="tx" style="left:486.80px;top:1309.00px;font-size:19.33px;line-height:19.33px;font-weight:bold;color:#000">136935</div>
<div class="tx" style="left:395.00px;top:1339.69px;font-size:19.33px;line-height:19.33px;color:#000">53</div>
<div class="tx" style="left:497.80px;top:1339.69px;font-size:19.33px;line-height:19.33px;color:#000">14575</div>
<div class="tx" style="left:395.00px;top:1370.38px;font-size:19.33px;line-height:19.33px;color:#000">87</div>
<div class="tx" style="left:497.80px;top:1370.38px;font-size:19.33px;line-height:19.33px;color:#000">57855</div>
<div class="tx" style="left:395.00px;top:1401.07px;font-size:19.33px;line-height:19.33px;color:#000">97</div>
<div class="tx" style="left:497.80px;top:1401.07px;font-size:19.33px;line-height:19.33px;color:#000">64505</div>
<div class="tx" style="left:374.00px;top:1431.76px;font-size:19.33px;line-height:19.33px;font-weight:bold;color:#000">9627</div>
<div class="tx" style="left:486.80px;top:1431.76px;font-size:19.33px;line-height:19.33px;font-weight:bold;color:#000">371843</div>
<div class="tx" style="left:12.70px;top:664.31px;font-size:19.33px;line-height:19.33px;color:#222">2</div>
<div class="tx" style="left:12.70px;top:695.00px;font-size:19.33px;line-height:19.33px;color:#217346">3</div>
<div class="tx" style="left:13.20px;top:725.69px;font-size:19.33px;line-height:19.33px;color:#222">4</div>
<div class="tx" style="left:12.70px;top:756.38px;font-size:19.33px;line-height:19.33px;color:#222">5</div>
<div class="tx" style="left:12.70px;top:787.07px;font-size:19.33px;line-height:19.33px;color:#222">6</div>
<div class="tx" style="left:12.70px;top:817.76px;font-size:19.33px;line-height:19.33px;color:#222">7</div>
<div class="tx" style="left:12.70px;top:848.45px;font-size:19.33px;line-height:19.33px;color:#222">8</div>
<div class="tx" style="left:12.70px;top:879.14px;font-size:19.33px;line-height:19.33px;color:#222">9</div>
<div class="tx" style="left:7.90px;top:909.83px;font-size:19.33px;line-height:19.33px;color:#222">10</div>
<div class="tx" style="left:8.90px;top:940.52px;font-size:19.33px;line-height:19.33px;color:#222">11</div>
<div class="tx" style="left:7.90px;top:971.21px;font-size:19.33px;line-height:19.33px;color:#222">12</div>
<div class="tx" style="left:7.90px;top:1001.90px;font-size:19.33px;line-height:19.33px;color:#222">13</div>
<div class="tx" style="left:7.90px;top:1032.59px;font-size:19.33px;line-height:19.33px;color:#222">14</div>
<div class="tx" style="left:7.90px;top:1063.28px;font-size:19.33px;line-height:19.33px;color:#222">15</div>
<div class="tx" style="left:7.90px;top:1093.97px;font-size:19.33px;line-height:19.33px;color:#222">16</div>
<div class="tx" style="left:7.90px;top:1124.66px;font-size:19.33px;line-height:19.33px;color:#222">17</div>
<div class="tx" style="left:7.90px;top:1155.35px;font-size:19.33px;line-height:19.33px;color:#222">18</div>
<div class="tx" style="left:7.90px;top:1186.04px;font-size:19.33px;line-height:19.33px;color:#222">19</div>
<div class="tx" style="left:7.90px;top:1216.73px;font-size:19.33px;line-height:19.33px;color:#222">20</div>
<div class="tx" style="left:7.90px;top:1247.42px;font-size:19.33px;line-height:19.33px;color:#222">21</div>
<div class="tx" style="left:7.90px;top:1278.11px;font-size:19.33px;line-height:19.33px;color:#222">22</div>
<div class="tx" style="left:7.90px;top:1308.80px;font-size:19.33px;line-height:19.33px;color:#222">23</div>
<div class="tx" style="left:7.90px;top:1339.49px;font-size:19.33px;line-height:19.33px;color:#222">24</div>
<div class="tx" style="left:7.90px;top:1370.18px;font-size:19.33px;line-height:19.33px;color:#222">25</div>
<div class="tx" style="left:7.90px;top:1400.87px;font-size:19.33px;line-height:19.33px;color:#222">26</div>
<div class="tx" style="left:7.90px;top:1431.56px;font-size:19.33px;line-height:19.33px;color:#222">27</div>
<div class="tx" style="left:7.90px;top:1462.25px;font-size:19.33px;line-height:19.33px;color:#222">28</div>
<div style="left:0;top:1475.6px;width:1020px;height:24px;background:#fff"></div>
</body></html>
